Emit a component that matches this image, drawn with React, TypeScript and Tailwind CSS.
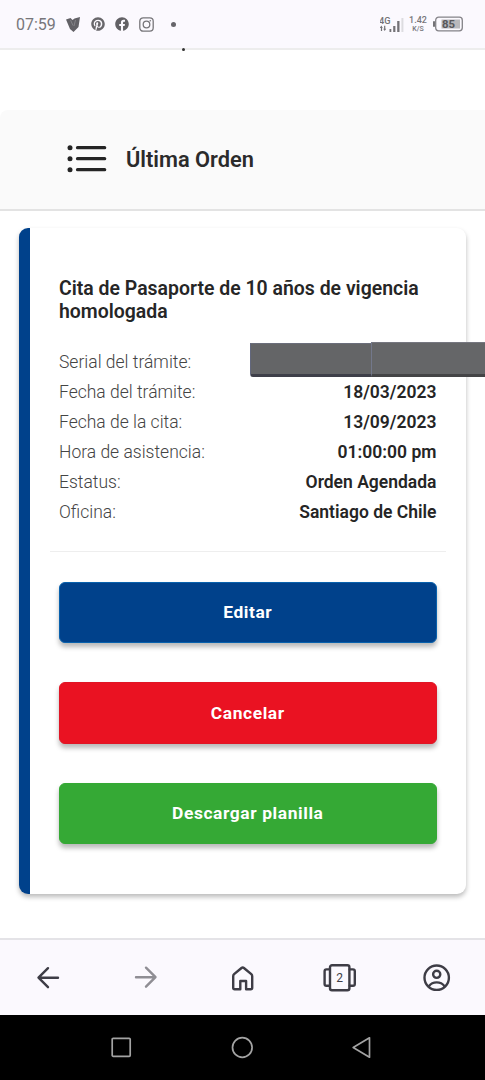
import type { ReactNode } from 'react'
import { FaFacebook, FaPinterest } from 'react-icons/fa'

interface Detail {
  label: string
  value?: string
}

const DETAILS: Detail[] = [
  { label: 'Serial del trámite:' },
  { label: 'Fecha del trámite:', value: '18/03/2023' },
  { label: 'Fecha de la cita:', value: '13/09/2023' },
  { label: 'Hora de asistencia:', value: '01:00:00 pm' },
  { label: 'Estatus:', value: 'Orden Agendada' },
  { label: 'Oficina:', value: 'Santiago de Chile' },
]

const ACTIONS = [
  { label: 'Editar', color: 'bg-[#00418b] border-[#0861ad]' },
  { label: 'Cancelar', color: 'bg-[#ea1222] border-[#e01525]' },
  { label: 'Descargar planilla', color: 'bg-[#35a935] border-[#35a935]' },
]

function StatusBar() {
  return (
    <div className="relative flex h-[50px] items-center justify-between border-b-2 border-[#ededed] bg-[#fbf9fe] pl-4 pr-[22px] text-[#77767a]">
      <div className="flex items-center">
        <span className="w-[50px] pt-[2px] text-base">07:59</span>
        <svg className="h-[15px] w-[14px]" viewBox="0 0 14 15" fill="#626166">
          <path d="M0 2.5 4.5 1 6.5 3 8.5 1.5 14 0 12.5 10 7.5 15 4 12z" />
          <path d="M4.5 3 7 8.5M9.5 3 8 9" stroke="#a5a4a8" strokeWidth="0.5" fill="none" />
        </svg>
        <FaPinterest className="ml-[11px] size-[14px] text-[#68676b]" />
        <FaFacebook className="ml-[10px] size-[14px] text-[#626165]" />
        <svg className="ml-[10px] size-[15px]" viewBox="0 0 15 15" fill="none" stroke="#77767a" strokeWidth="1.3">
          <rect x="0.8" y="0.8" width="13.4" height="13.4" rx="3.4" />
          <circle cx="7.5" cy="7.5" r="3.3" />
          <circle cx="11.3" cy="3.7" r="0.8" fill="#77767a" stroke="none" />
        </svg>
        <span className="ml-[17px] size-[5px] rounded-full bg-[#66656a]" />
      </div>

      <div className="flex items-center">
        <svg className="h-[17px] w-[26px]" viewBox="0 0 26 17" fill="#737276">
          <text x="-1" y="8" fontSize="9" fontWeight="500" textLength="11.5" lengthAdjust="spacingAndGlyphs">4G</text>
          <path d="M-.3 12 1.4 9.6 2.8 12H2.1V15H.9V12zM3.2 12.7h.9v-3h1.2v3h.9L4.7 15z" />
          <rect x="9.5" y="13" width="1.8" height="3" />
          <rect x="13.2" y="10" width="2.2" height="6" />
          <rect x="17.2" y="5" width="2.3" height="11" />
          <rect x="21.4" y="2" width="2" height="14" fill="#dddce0" />
        </svg>
        <div className="ml-[3px] flex w-[18px] flex-col items-center text-[9px] leading-[9px] font-medium">
          <span>1.42</span>
          <span className="text-[7px] leading-[8px]">K/S</span>
        </div>
        <svg className="ml-[6px] h-4 w-[30px]" viewBox="0 0 30 16" fill="none">
          <rect x="0" y="5" width="2" height="6" rx="1" fill="#737276" />
          <rect x="2.7" y="1.2" width="26.6" height="13.6" rx="3" stroke="#848388" strokeWidth="1.3" />
          <rect x="8.5" y="3.5" width="18.5" height="9" fill="#b9b8bc" />
          <text x="9" y="11.8" fontSize="10" fontWeight="700" fill="#58575b" textLength="13" lengthAdjust="spacingAndGlyphs">85</text>
        </svg>
      </div>
      <span className="absolute left-[182px] top-[48px] size-[3px] rounded-full bg-[#333]" />
    </div>
  )
}

function SectionHeader() {
  return (
    <header className="mt-[60px] flex h-[101px] items-center rounded-tl-lg border-b-2 border-[#e3e3e3] bg-[#fafafa] pb-[2px] pl-[67px]">
      <svg className="h-[28px] w-10" viewBox="0 0 40 28" fill="#242424" stroke="#242424" strokeLinecap="round">
        {[2.7, 13.7, 24.7].map((y) => (
          <g key={y}>
            <circle cx="3" cy={y} r="2.5" stroke="none" />
            <path d={`M10.5 ${y}H37.7`} strokeWidth="3.2" />
          </g>
        ))}
      </svg>
      <h1 className="ml-[19px] pt-[3px] text-[21.8px] font-semibold text-[#2b2b2b]">Última Orden</h1>
    </header>
  )
}

// Hides the serial number; runs past the card to the edge of the screen.
function SerialCover() {
  return (
    <div className="absolute -right-[48.5px] -top-[6px] z-10 flex h-[35px] w-[235px] items-end">
      <div className="h-[34px] w-[121px] rounded-bl-[3px] border-b-[3px] border-l border-t border-b-[#3e3f49] border-l-[#62677d] border-t-[#6b6e7b] bg-[#646567]" />
      <div className="h-[35px] flex-1 border-b-[3px] border-l border-t border-b-[#444446] border-l-[#73788b] border-t-[#767780] bg-[#656668]" />
    </div>
  )
}

function OrderCard() {
  return (
    <main className="ml-[19px] mr-[19px] mt-[17px] h-[665.5px] rounded-[9px] border-l-[11px] border-[#00418b] bg-white pl-[29px] pr-[29.5px] pt-[48.5px] shadow-[0_3px_5px_rgba(0,0,0,0.27)]">
      <h2 className="text-[19.45px] leading-[23px] font-semibold text-[#262626]">
        Cita de Pasaporte de 10 años de vigencia homologada
      </h2>

      <dl className="mt-[25px]">
        {DETAILS.map(({ label, value }) => (
          <div key={label} className="relative flex h-[30px] items-center justify-between text-[17.5px]">
            <dt className="font-light text-[#444]">{label}</dt>
            <dd className="font-semibold text-[#252525]">{value ?? <SerialCover />}</dd>
          </div>
        ))}
      </dl>

      <hr className="-mx-[9px] mt-[23.5px] border-[#eee]" />

      <div className="mt-[29.5px] flex flex-col gap-[39px]">
        {ACTIONS.map(({ label, color }) => (
          <button
            key={label}
            className={`h-[61.5px] rounded-[6px] border text-[17.4px] font-bold tracking-[0.6px] text-white shadow-[0_4px_5px_rgba(0,0,0,0.28)] ${color}`}
          >
            {label}
          </button>
        ))}
      </div>
    </main>
  )
}

function NavIcon({ children, dim = false }: { children: ReactNode; dim?: boolean }) {
  return (
    <div className="flex flex-1 justify-center">
      <svg
        className={dim ? 'h-[30px] w-9 text-[#8f8e94]' : 'h-[30px] w-9 text-[#3e3d46]'}
        viewBox="0 0 36 30"
        fill="none"
        stroke="currentColor"
        strokeWidth="2.4"
        strokeLinecap="round"
        strokeLinejoin="round"
      >
        {children}
      </svg>
    </div>
  )
}

function BrowserBar() {
  return (
    <nav className="flex h-[77px] items-center border-t-2 border-[#e4e3e7] bg-[#fbf9fe]">
      <NavIcon>
        <path d="M27 14.7H8M17 5.2 7.5 14.7 17 24.2" />
      </NavIcon>
      <NavIcon dim>
        <path d="M8 14.2H27M18 4.7 27.5 14.2 18 23.7" />
      </NavIcon>
      <NavIcon>
        <path d="M8.2 13.2q0-1.2.9-2l7.4-6.2q1.2-1 2.4 0l7.4 6.2q.9.8.9 2V24.7q0 1.5-1.5 1.5h-4.6V18h-5.8v8.2H9.7q-1.5 0-1.5-1.5z" />
      </NavIcon>
      <NavIcon>
        <rect x="8" y="2.2" width="19.4" height="25" rx="2" />
        <path d="M7.7 6.4H4.4q-1.8 0-1.8 1.8v12.8q0 1.8 1.8 1.8h3.3M27.7 6.4H31q1.8 0 1.8 1.8v12.8q0 1.8-1.8 1.8h-3.3" />
        <text x="17.7" y="18.8" fontSize="12" textAnchor="middle" fill="currentColor" stroke="none">2</text>
      </NavIcon>
      <NavIcon>
        <circle cx="17.7" cy="14.7" r="12.2" />
        <circle cx="17.7" cy="11.3" r="3.6" />
        <path d="M9.9 23.2q2.8-3.8 7.8-3.8t7.8 3.8" />
      </NavIcon>
    </nav>
  )
}

function SystemBar() {
  return (
    <div className="flex h-[65px] items-center bg-black px-[61px]">
      {[
        <rect key="recents" x="2.2" y="2.3" width="18" height="18" rx="1" />,
        <circle key="home" cx="11.3" cy="11.5" r="9.8" />,
        <path key="back" d="M17.5 1.8v19.4L1.2 11.5z" />,
      ].map((shape, i) => (
        <div key={i} className="flex flex-1 justify-center">
          <svg className="size-[23px]" viewBox="0 0 23 23" fill="none" stroke="#a3a3a3" strokeWidth="1.7" strokeLinejoin="round">
            {shape}
          </svg>
        </div>
      ))}
    </div>
  )
}

export default function App() {
  return (
    <div className="flex h-[1080px] w-[485px] flex-col overflow-hidden bg-white font-['Roboto',sans-serif]">
      <StatusBar />
      <SectionHeader />
      <OrderCard />
      <div className="flex-1" />
      <BrowserBar />
      <SystemBar />
    </div>
  )
}
